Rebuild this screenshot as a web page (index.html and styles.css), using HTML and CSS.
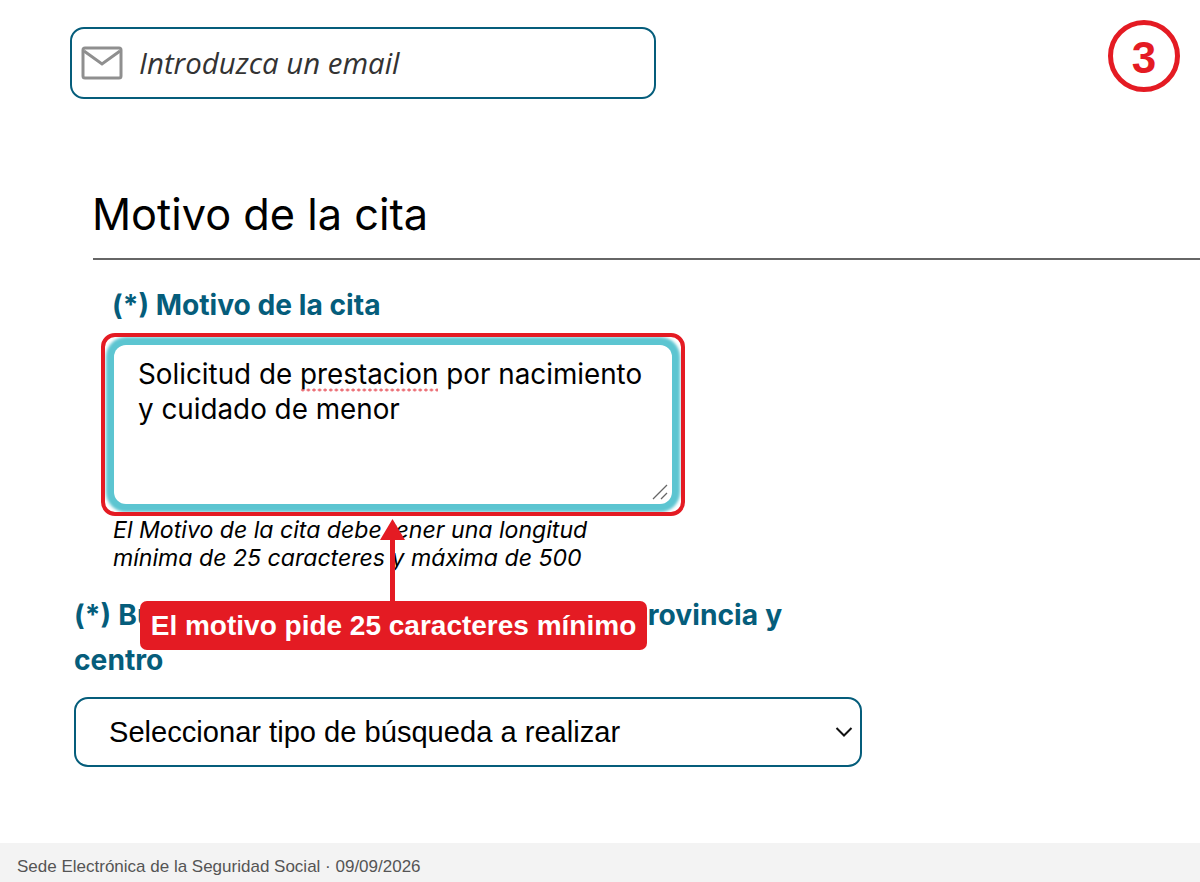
FILE: index.html
```html
<!DOCTYPE html>
<html lang="es">
<head>
<meta charset="UTF-8">
<meta name="viewport" content="width=device-width, initial-scale=1.0">
<title>Motivo de la cita</title>
<link rel="stylesheet" href="styles.css">
</head>
<body>
  <main class="page">
    <div class="top-row">
      <div class="email-box">
        <svg class="mail-icon" width="42" height="34" viewBox="0 0 42 34" fill="none" stroke="#8f8f8f" stroke-width="3">
          <rect x="2" y="2" width="38" height="30" rx="2"></rect>
          <path d="M3 5 L21 18 L39 5"></path>
        </svg>
        <span class="email-text">Introduzca un email</span>
      </div>
      <div class="step-badge">3</div>
    </div>

    <section class="motivo">
      <h2 class="section-title">Motivo de la cita</h2>
      <label class="field-label">(*) Motivo de la cita</label>
      <div class="highlight">
        <div class="motivo-area">
          Solicitud de <span class="misspelt">prestacion</span> por nacimiento<br>y cuidado de menor
          <svg class="resizer" width="16" height="16" viewBox="0 0 16 16" fill="none" stroke="#666" stroke-width="1.3">
            <path d="M1 15 L15 1 M9 15 L15 9"></path>
          </svg>
        </div>
      </div>
      <p class="hint">El Motivo de la cita debe tener una longitud<br>mínima de 25 caracteres y máxima de 500</p>
    </section>

    <section class="busqueda">
      <label class="field-label search-label">(*) Buscar por código postal, municipio, provincia y centro</label>
      <div class="select-box">
        <span>Seleccionar tipo de búsqueda a realizar</span>
        <svg width="18" height="12" viewBox="0 0 18 12" fill="none" stroke="#111" stroke-width="2">
          <path d="M1.5 2 L9 9.5 L16.5 2"></path>
        </svg>
      </div>
    </section>

    <div class="callout">
      <svg class="callout-arrow" width="25" height="82" viewBox="0 0 25 82" fill="#e41b23">
        <path d="M12.5 0 L25 21 L15 21 L15 82 L10 82 L10 21 L0 21 Z"></path>
      </svg>
      <div class="callout-text">El motivo pide 25 caracteres mínimo</div>
    </div>
  </main>
  <footer class="footer">Sede Electrónica de la Seguridad Social · 09/09/2026</footer>
</body>
</html>
```

FILE: styles.css
```css
html, body {
  margin: 0;
  height: 100%;
}
body {
  font-family: Inter, "Liberation Sans", sans-serif;
  background-color: #fff;
  color: #000;
  display: flex;
  flex-direction: column;
  overflow: hidden;
}
.page {
  position: relative;
  flex: 1;
}
.top-row {
  display: flex;
  justify-content: space-between;
  align-items: flex-start;
  padding: 20px 20px 0 70px;
}
.email-box {
  display: flex;
  align-items: center;
  gap: 16px;
  box-sizing: border-box;
  width: 586px;
  height: 72px;
  margin-top: 7px;
  padding-left: 9px;
  border: 2px solid #055d7b;
  border-radius: 14px;
}
.email-text {
  font-family: "Open Sans", sans-serif;
  font-style: italic;
  font-size: 29.4px;
  color: #333;
}
.step-badge {
  box-sizing: border-box;
  width: 72px;
  height: 72px;
  border: 5px solid #e41b23;
  border-radius: 50%;
  color: #e41b23;
  font-family: "Liberation Sans", sans-serif;
  font-weight: bold;
  font-size: 44px;
  line-height: 65px;
  text-align: center;
}
.motivo {
  margin: 0;
  padding: 0 0 0 93px;
}
.section-title {
  margin: 87px 0 0;
  padding-bottom: 16px;
  border-bottom: 2px solid #666;
  font-size: 43.3px;
  font-weight: 400;
  line-height: 56px;
  text-indent: -1px;
}
.field-label {
  display: block;
  font-size: 28.2px;
  font-weight: 700;
  color: #055d7b;
  line-height: 44px;
}
.motivo .field-label {
  margin: 23px 0 0 19px;
}
.highlight {
  box-sizing: border-box;
  width: 584px;
  height: 183px;
  margin: 6px 0 0 8px;
  padding: 8px 9px;
  border: 4px solid #e41b23;
  border-radius: 14px;
  background-color: #fff;
  overflow: hidden;
}
.motivo-area {
  position: relative;
  box-sizing: border-box;
  height: 159px;
  padding: 12px 24px;
  border-radius: 12px;
  background-color: #fff;
  box-shadow: 0 0 3px 8px #5cc5d1;
  font-size: 27.8px;
  line-height: 35px;
}
.misspelt {
  padding-bottom: 1px;
  background: radial-gradient(circle, #ec6f76 1.4px, transparent 1.7px) left bottom / 5.6px 4px repeat-x;
}
.resizer {
  position: absolute;
  right: 4px;
  bottom: 4px;
}
.hint {
  margin: 0 0 0 20px;
  font-size: 23.1px;
  font-style: italic;
  line-height: 28px;
}
.busqueda {
  padding: 21px 0 0 74px;
  width: 788px;
}
.search-label {
  width: 720px;
  line-height: 45px;
  word-spacing: 0.6px;
}
.select-box {
  display: flex;
  justify-content: space-between;
  align-items: center;
  box-sizing: border-box;
  height: 70px;
  margin-top: 14px;
  padding: 0 7px 0 33px;
  border: 2px solid #055d7b;
  border-radius: 14px;
  font-family: "Liberation Sans", sans-serif;
  font-size: 29.1px;
}
.callout {
  position: absolute;
  left: 140px;
  top: 519px;
  width: 507px;
}
.callout-arrow {
  display: block;
  margin-left: 240px;
}
.callout-text {
  box-sizing: border-box;
  height: 49px;
  border-radius: 7px;
  background-color: #e41b23;
  color: #fff;
  font-family: "Liberation Sans", sans-serif;
  font-weight: bold;
  font-size: 28px;
  line-height: 49px;
  text-align: center;
  white-space: nowrap;
}
.footer {
  height: 39px;
  padding-left: 17px;
  background-color: #f3f3f3;
  color: #555;
  font-family: "Liberation Sans", sans-serif;
  font-size: 17px;
  line-height: 47px;
}
```
